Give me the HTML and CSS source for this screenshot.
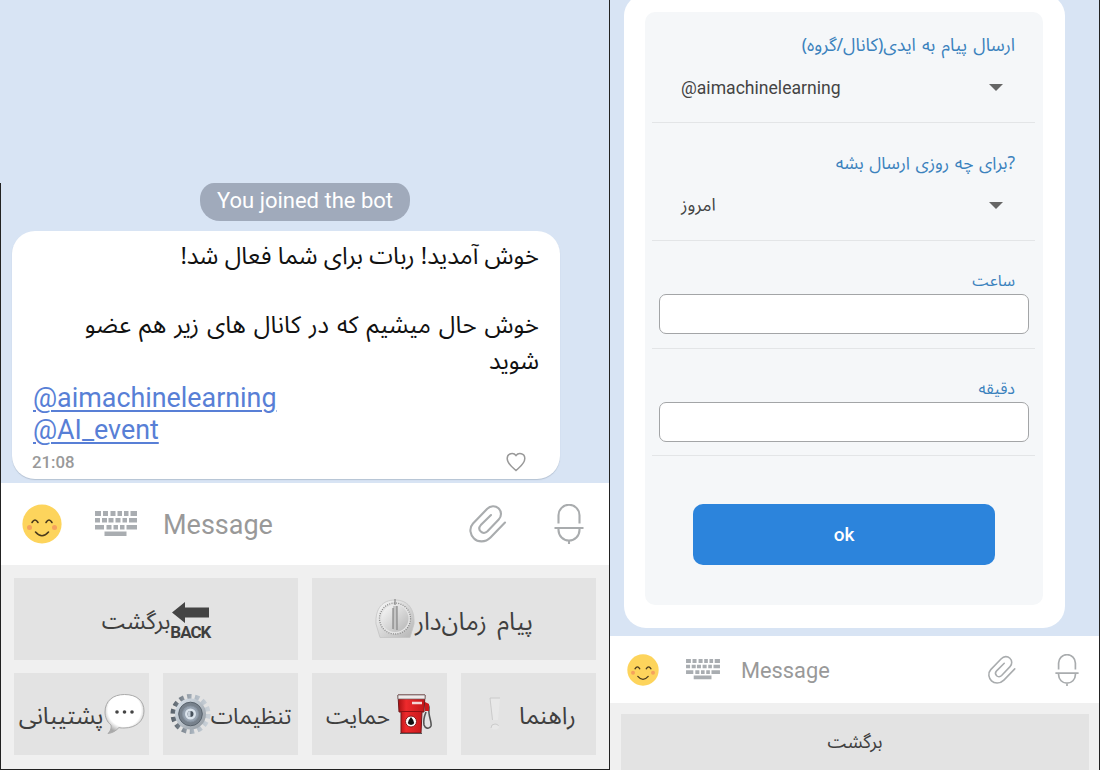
FILE: index.html
```html
<!DOCTYPE html>
<html lang="fa">
<head>
<meta charset="utf-8">
<title>Bot chat</title>
<link rel="stylesheet" href="styles.css">
</head>
<body>
<svg class="defs" width="0" height="0">
  <defs>
    <linearGradient id="metal" x1="0" y1="0" x2="1" y2="1"><stop offset="0" stop-color="#dde6ef"/><stop offset="1" stop-color="#9299a0"/></linearGradient>
    <linearGradient id="tooth" x1="0" y1="0" x2="1" y2="0"><stop offset="0" stop-color="#5d666f"/><stop offset=".6" stop-color="#aeb8c2"/><stop offset="1" stop-color="#c9d0d7"/></linearGradient>
    <linearGradient id="dial" x1="0" y1="0" x2="1" y2="1"><stop offset="0" stop-color="#fafafa"/><stop offset="1" stop-color="#b5b5b5"/></linearGradient>
    <linearGradient id="pump" x1="0" y1="0" x2="1" y2="0"><stop offset="0" stop-color="#a80f12"/><stop offset=".3" stop-color="#ee2a2c"/><stop offset="1" stop-color="#c21518"/></linearGradient>
    <radialGradient id="cloud" cx=".5" cy=".4" r=".6"><stop offset=".7" stop-color="#fff"/><stop offset="1" stop-color="#a9a9a9"/></radialGradient>
  </defs>
  <symbol id="smile" viewBox="0 0 40 40">
    <circle cx="20" cy="20" r="19.6" fill="#fdd45c"/>
    <circle cx="7.500" cy="23.500" r="2.500" fill="#f5a25d"/><circle cx="32.500" cy="23.500" r="2.500" fill="#f5a25d"/>
    <path d="M10 18.500q3-5 6 0M24 18.500q3-5 6 0M13.500 28q6.500 7.500 13 0" fill="none" stroke="#4a3a1d" stroke-width="1.600" stroke-linecap="round"/>
  </symbol>
  <symbol id="keys" viewBox="0 0 42 26">
    <path fill="#a9adb1" d="M0 0h6v5H0zM8 0h5v5H8zM15.500 0h5v5h-5zM22.500 0h4.500v5h-4.500zM29 0h4.500v5H29zM35.500 0H42v5h-6.500zM0 7h5v4.500H0zM7 7h5v4.500H7zM13.500 7h5v4.500h-5zM20.500 7h5v4.500h-5zM27.500 7h4.500v4.500h-4.500zM34 7h8v4.500h-8zM0 14h9v4.500H0zM11.500 14h5v4.500h-5zM18.500 14h4.500v4.500h-4.500zM25 14h4.500v4.500H25zM31.500 14H42v4.500H31.500zM9.500 20.500h22V25h-22z"/>
  </symbol>
  <symbol id="clip" viewBox="0 0 38 40">
    <path d="M36 18.500 21.500 33.500C16 39 8.500 38 5 34.500S-.5 24.500 4 19.500L18 5c3.500-3.700 8.500-3.500 11.500-.7s3.500 7.700.2 11.200L18.500 27.300c-2 2-5 2-6.700.3s-2-4.300 0-6.500L22 11" fill="none" stroke="#a9acae" stroke-width="2.100" stroke-linecap="round"/>
  </symbol>
  <symbol id="mic" viewBox="0 0 30 40">
    <path d="M4.500 19.500V11.300a10.500 10.500 0 0 1 21 0v8.200M.5 24h29M4.500 24v2a10.500 10.500 0 0 0 21 0v-2M15 36.500V40" fill="none" stroke="#a9acae" stroke-width="2.100"/>
  </symbol>
</svg>
<main class="screens">
  <section class="left">
    <div class="blank"></div>
    <div class="phone">
      <div class="chat">
        <div class="pill">You joined the bot</div>
        <article class="bubble">
          <p class="fa big one" dir="rtl">خوش آمدید! ربات برای شما فعال شد!</p>
          <p class="fa big two" dir="rtl">خوش حال میشیم که در کانال های زیر هم عضو<br>شوید</p>
          <p class="link first">@aimachinelearning</p>
          <p class="link">@AI_event</p>
          <footer><span>21:08</span>
            <svg width="20" height="20" viewBox="0 0 20 20"><path d="M10 18.500C7 15.500 1.200 12 1.200 6.500c0-5.600 6.500-6 8.800-3 2.300-3 8.800-2.600 8.800 3 0 5.500-5.800 9-8.800 12z" fill="none" stroke="#999" stroke-width="1.500"/></svg>
          </footer>
        </article>
      </div>
      <div class="bar">
        <svg class="smile"><use href="#smile"/></svg>
        <svg class="keys"><use href="#keys"/></svg>
        <span class="hint">Message</span>
        <svg class="clip"><use href="#clip"/></svg>
        <svg class="mic"><use href="#mic"/></svg>
      </div>
      <div class="pad">
        <div class="row">
          <div class="key"><span class="fa k-back">برگشت</span>
            <div class="backicon"><svg width="37" height="21" viewBox="0 0 37 21"><path d="M0 10.500 13 0v5.500h24v10H13V21z" fill="#444"/></svg><b>BACK</b></div>
          </div>
          <div class="key">
            <svg width="40" height="40" viewBox="0 0 40 40"><path d="M5 38.500 1 25C0 9 8 1 20 1s20 8 19 24l-4 13.500z" fill="url(#dial)" stroke="#c4c4c4" stroke-width=".8"/><circle cx="20" cy="19.500" r="15.500" fill="#e4e4e4" stroke="#888" stroke-width="1.300" stroke-dasharray="1 1.300"/><circle cx="20" cy="19.500" r="13.500" fill="url(#dial)"/><path d="M18 7h4v24h-4z" fill="#c5c5c5"/><path d="M22 7v24M18 9v21M20 0v6" stroke="#777" stroke-width="1"/></svg>
            <span class="fa k-timer">پیام زمان‌دار</span></div>
        </div>
        <div class="row">
          <div class="key"><span class="fa">پشتیبانی</span>
            <svg width="41" height="42" viewBox="0 0 41 42"><path d="M20.500 1.500C33 1.500 40 8 40 18S32 35 20 35c-2 0-4 0-5-.5C12 38 8 40 4 40.500c3-3 3.500-6 3-8.500-4-3-6-8-6-13C1 8 9 1.500 20.500 1.500z" fill="url(#cloud)" stroke="#aaa"/><g fill="#444"><circle cx="13" cy="19" r="1.800"/><circle cx="20.500" cy="19" r="1.800"/><circle cx="28" cy="19" r="1.800"/></g></svg>
          </div>
          <div class="key">
            <svg width="41" height="42" viewBox="-20.500 -21 41 42"><circle r="17.500" fill="none" stroke="url(#tooth)" stroke-width="5" stroke-dasharray="4.500 3.354"/><circle r="15.500" fill="url(#metal)"/><circle r="11.800" fill="#77818c" stroke="#58626c"/><circle r="8" fill="#97a3b1" stroke="#8793a0"/><circle r="5.500" fill="#dbe4ed"/><circle r="3" fill="#46515c"/><path d="M0-3a3 3 0 0 0 0 6z" fill="#c6d0da"/></svg>
            <span class="fa k-set">تنظیمات</span></div>
          <div class="key"><span class="fa k-sup">حمایت</span>
            <svg class="fuel" width="36" height="41" viewBox="0 0 36 41"><path d="M28 10q5 0 4 6c-1 5 3 12 2 16-2 4-6 2-7-1-1-5 0-8 2-13" fill="none" stroke="#555" stroke-width="1.600"/><path d="M28 8l4 2v7h-4z" fill="#c9181b"/><path d="M1 1h27l-1 17h-2l-1 21H4L4 18H2z" fill="url(#pump)" stroke="#70191b"/><path d="M1 1h27v4H1z" fill="#f1e9e9" stroke="#666" stroke-width=".7"/><path d="M3 17.500h23" stroke="#8f1114"/><path d="M15 9h10" stroke="#f3d5d5" stroke-width="2.500"/><path d="M3 39.500h22" stroke="#555"/><circle cx="14" cy="27.500" r="5.500" fill="#fff" stroke="#8a1719"/><path d="M14 23q6 7 0 8-6-1 0-8z" fill="#111"/></svg>
          </div>
          <div class="key">
            <svg class="mark" width="14" height="34" viewBox="0 0 14 34"><path d="M2 1h10l-2 22H5zM3 31q0-4 4-4 4 0 4 4-4 3-8 0z" fill="#e8e8e8"/><path d="M12 1H2l2.500 22M3 31q0-4 4-4 3 0 3.500 2" fill="none" stroke="#c4c4c4" stroke-width=".8"/></svg>
            <span class="fa">راهنما</span></div>
        </div>
      </div>
    </div>
  </section>
  <section class="right">
    <div class="chat2">
      <div class="card"><form class="form">
        <div class="field sel"><label class="fa l1" dir="rtl">ارسال پیام به ایدی(کانال/گروه)</label><div class="select"><span class="en">@aimachinelearning</span><i></i></div></div>
        <div class="field sel"><label class="fa l2" dir="ltr">&rlm;?برای چه روزی ارسال بشه</label><div class="select"><span class="fa">امروز</span><i></i></div></div>
        <div class="field inp"><label class="fa" dir="rtl">ساعت</label><div class="box"></div></div>
        <div class="field inp"><label class="fa" dir="rtl">دقیقه</label><div class="box"></div></div>
        <div class="ok">ok</div>
      </form></div>
    </div>
    <div class="bar small">
      <svg class="smile"><use href="#smile"/></svg>
      <svg class="keys"><use href="#keys"/></svg>
      <span class="hint">Message</span>
      <svg class="clip"><use href="#clip"/></svg>
      <svg class="mic"><use href="#mic"/></svg>
    </div>
    <div class="pad2"><div class="key"><span class="fa">برگشت</span></div></div>
  </section>
</main>
</body>
</html>
```
FILE: styles.css
```css
* { box-sizing: border-box; }
body { margin: 0; width: 1100px; height: 770px; overflow: hidden; font-family: Roboto, "Liberation Sans", sans-serif; background: #d8e4f4; }
p { margin: 0; }
svg { flex: none; display: block; }
.defs { position: absolute; }
.fa { font-family: "Noto Sans Arabic", "Noto Naskh Arabic UI", "Noto Naskh Arabic", Roboto, "DejaVu Sans", sans-serif; white-space: nowrap; }
.screens { display: grid; grid-template-columns: 610px 490px; height: 770px; }
.left { border-right: 1px solid #222; display: flex; flex-direction: column; }
.blank { height: 183px; flex: none; }
.phone { height: 587px; border-left: 1px solid #222; border-bottom: 1px solid #222; display: flex; flex-direction: column; }
.chat { height: 300px; flex: none; padding-left: 11px; }
.pill { width: 210px; height: 38px; margin-left: 188px; border-radius: 14px 14px 20px 20px / 16px 16px 20px 20px; background: #a0aabb; color: #fff; font-size: 22px; line-height: 36px; text-align: center; }
.bubble { width: 548px; height: 248px; margin-top: 10px; background: #fff; border-radius: 23px; box-shadow: 0 1px 1px #b5c2d3; padding: 8px 21px 0; }
.big { font-size: 24px; line-height: 35px; color: #111; }
.one { word-spacing: 0; }
.two { margin-top: 34px; line-height: 36px; word-spacing: 1.700px; }
.link { color: #587fd6; font-size: 26.850px; line-height: 32px; text-decoration: underline; text-decoration-thickness: 1.500px; text-underline-offset: 3px; }
.first { margin-top: 2px; }
.bubble footer { display: flex; justify-content: space-between; align-items: center; height: 32px; padding-right: 13px; color: #999; font-size: 16.800px; font-weight: 500; margin-left: -1px; }
.bar { height: 82px; flex: none; background: #fff; display: flex; align-items: center; padding: 0 25px 0 21px; }
.smile { width: 40px; height: 40px; }
.keys { width: 42px; height: 26px; margin-left: 33px; }
.hint { font-size: 27px; color: #999; margin-left: 26px; flex: 1; padding-top: 2px; }
.clip { width: 38px; height: 40px; }
.mic { width: 30px; height: 40px; margin-left: 47px; }
.pad { flex: 1; background: #f0f0f0; padding: 13px 13px 0; display: flex; flex-direction: column; gap: 13px; }
.row { display: flex; gap: 13.600px; height: 82px; }
.row .key { flex: 1 1 0; min-width: 0; }
.key { background: #e3e3e3; color: #3f3f3f; font-size: 24px; display: flex; align-items: center; justify-content: center; }
.row .fa { padding-top: 5px; }
.row .k-back { font-size: 23px; }
.row .k-timer { font-size: 24.700px; word-spacing: 4px; }
.row .k-set { font-size: 22.500px; }
.row .k-sup { font-size: 22.500px; }
.backicon { display: flex; flex-direction: column; align-items: center; width: 40px; padding-top: 4px; }
.backicon b { font-size: 17px; line-height: 18px; letter-spacing: -1px; }
.fuel { margin-left: 7px; }
.mark { margin: 0 17px 0 7px; }
.right { border-right: 1px solid #222; display: flex; flex-direction: column; }
.chat2 { height: 636px; flex: none; padding-left: 14px; overflow: hidden; }
.card { width: 441px; height: 634px; margin-top: -6px; padding: 18px 21px; background: #fff; border-radius: 22px; }
.form { width: 398px; height: 593px; background: #f5f7f9; border-radius: 10px; padding: 0 8px 0 7px; }
.field { border-bottom: 1px solid #e3e5e7; display: flex; flex-direction: column; padding: 0 6px 0 7px; }
.sel { height: 118px; padding-top: 21px; }
.sel:first-child { height: 111px; padding-top: 14px; }
.sel:first-child .en { padding-top: 2px; }
.field label { font-size: 17px; line-height: 40px; height: 40px; color: #3b82bd; text-align: right; padding-right: 14px; }
.field .l1 { word-spacing: 1.500px; font-size: 17.800px; }
.field .l2 { word-spacing: 1px; font-size: 17.400px; }
.select { display: flex; justify-content: space-between; align-items: center; height: 42px; padding: 0 26px 0 22px; color: #444; font-size: 17.600px; }
.select i { width: 0; height: 0; border: 7px solid transparent; border-top-color: #666; border-bottom: 0; }
.inp { height: 108px; padding-top: 20px; }
.inp + .inp { height: 107px; }
.inp label { height: 33px; font-size: 16px; }
.box { height: 40px; border: 1.500px solid #a3a5a7; border-radius: 7px; background: #fff; }
.ok { margin: 48px 40px 0 41px; height: 61px; background: #2c84dc; border-radius: 10px; color: #fff; font-size: 19px; font-weight: 500; text-align: center; line-height: 62px; }
.small { height: 67px; padding: 0 20px 0 17px; }
.small .smile { width: 32px; height: 32px; }
.small .keys { width: 34px; height: 21px; margin-left: 27px; }
.small .hint { font-size: 21.800px; margin-left: 21px; }
.small .clip { width: 30px; height: 30px; }
.small .mic { width: 24px; height: 32px; margin-left: 38px; }
.pad2 { flex: 1; background: #f0f0f0; padding: 11px 10px 0 11px; }
.pad2 .key { height: 56px; font-size: 18.500px; }
```
